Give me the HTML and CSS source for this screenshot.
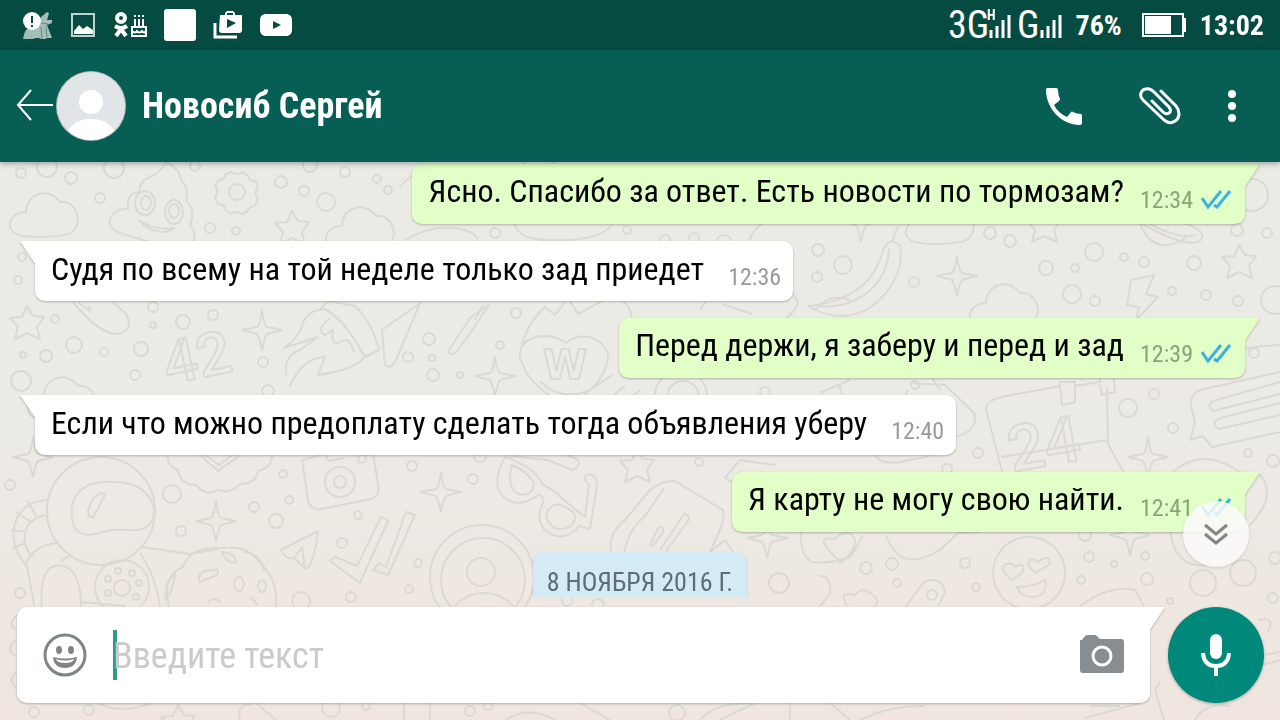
FILE: index.html
```html
<!DOCTYPE html>
<html lang="ru">
<head>
<meta charset="utf-8">
<meta name="viewport" content="width=device-width, initial-scale=1">
<title>Новосиб Сергей</title>
<link rel="stylesheet" href="styles.css">
</head>
<body>
<svg class="wallpaper" viewBox="0 0 1280 720" preserveAspectRatio="xMidYMid slice" aria-hidden="true">
  <defs>
    <path id="star" d="M0-17 6-7 17-6 10 4 13 16 0 10-12 16-9 4-17-5-5-6Z"/>
    <path id="spark" d="M0-20Q2-4 5-3L20 0 5 4Q3 6 0 20-3 6-5 4L-20 0-5-3Q-2-5 0-20Z"/>
    <path id="cloud" d="M-22 22C-44 20-38-2-20-2-20-20 2-28 14-12 30-14 38 8 26 18 20 23-10 24-22 22Z"/>
  </defs>
  <g id="dots"></g>
  <use href="#cloud" x="46" y="214"/>
  <use href="#cloud" x="362" y="228"/>
  <use href="#cloud" x="1006" y="305"/>
  <use href="#cloud" x="942" y="221"/>
  <use href="#cloud" x="64" y="398"/>
  <use href="#star" x="292" y="228"/>
  <use href="#star" x="27" y="323"/>
  <use href="#star" x="1044" y="226"/>
  <use href="#star" x="1239" y="262"/>
  <use href="#star" x="637" y="466"/>
  <use href="#star" x="178" y="722"/>
  <use href="#spark" x="957" y="276"/>
  <use href="#spark" x="861" y="221"/>
  <use href="#spark" x="262" y="330"/>
  <use href="#spark" x="495" y="376"/>
  <use href="#spark" x="33" y="457"/>
  <use href="#spark" x="216" y="521"/>
  <use href="#spark" x="441" y="492"/>
  <use href="#spark" x="767" y="538"/>
  <use href="#spark" x="1148" y="457"/>
  <use href="#spark" x="1130" y="535"/>
  <!-- swirl face -->
  <path d="M150 177Q164 170 165 162Q180 168 181 180Q190 190 186 201Q196 210 190 225Q204 242 176 250L130 236Q104 230 111 217Q116 208 128 209Q126 192 140 192Q138 182 150 177ZM138 220Q155 231 174 228 158 239 138 220Z"/>
  <ellipse cx="145" cy="203" rx="10" ry="12"/><ellipse cx="146" cy="203" rx="5" ry="7"/>
  <ellipse cx="174" cy="212" rx="9" ry="12"/><ellipse cx="174" cy="211" rx="5" ry="7"/>
  <!-- gear -->
  <circle cx="237" cy="192" r="8"/>
  <path d="M231 172q6 4 12 0l5 4q1 5 8 5l2 7q-5 5 0 11l-3 7q-6 0-8 6l-6 2q-5-4-10 0l-6-4q0-6-7-6l-3-7q5-5 0-11l4-6q6 0 7-6Z"/>
  <!-- planet -->
  <path d="M1140 224Q1150 247 1168 245 1182 243 1188 235M1142 224Q1190 250 1201 240 1208 230 1180 222M1150 224Q1180 240 1196 235"/>
  <circle cx="1252" cy="195" r="16"/>
  <!-- banana -->
  <path d="M892 242 898 226M900 245Q906 280 870 308 840 325 808 306 868 300 882 254Q885 243 892 241ZM889 249Q887 285 855 300 840 308 818 306"/>
  <!-- bolt -->
  <path d="M1131 280 1154 275 1146 294 1158 297 1136 320 1139 307 1127 305Z"/>
  <!-- numerals, calendar and crest lettering -->
  <text x="168" y="385" font-size="60" transform="rotate(-12 168 385)">42</text>
  <path d="M1060 386v-4h15v20l-13 3-2-19-48 9q-27 4-26 14l18 70M1075 386l25-4v-8h13l2 18-13 3-2-10M1107 387l1 57 20 36M1002 457l105-17"/>
  <text x="1012" y="472" font-size="64" transform="rotate(-10 1012 472)">24</text>
  <path d="M566 406Q528 384 523 365C510 342 541 326 566 343 585 326 614 345 607 363Q600 390 566 406ZM522 347Q525 326 545 307L555 315 568 298 578 314 604 300 617 300Q630 300 632 320"/>
  <text class="crest" x="543" y="379" font-size="40">W</text>
  <!-- pastry and flame rocket -->
  <path d="M73 302Q100 335 118 334 135 330 126 314L112 301M78 302Q96 317 88 306M286 375Q284 355 300 350L318 337 284 348Q297 340 302 326 306 310 325 309 345 320 365 357L379 350Q372 322 355 306L328 301 320 309M365 357Q354 370 318 375L325 357Q302 358 290 386M330 318Q315 330 325 335L333 330Q330 346 340 342Q350 335 354 353"/>
  <path d="M420 303 382 330 385 365Q390 370 396 360ZM449 350 470 318 489 305 469 335 460 347Q451 360 448 350M475 320l8-15M405 240Q440 220 470 232 485 240 470 248"/>
  <path d="M515 225Q520 242 560 240 600 240 612 225M750 240Q752 225 780 215M700 310Q715 283 760 278 790 280 798 303 788 325 760 330M722 304l30 10M816 309Q830 292 850 300M520 160l18 16 22-20M400 187Q410 174 422 173"/>
  <!-- lollipop, rolls -->
  <circle cx="681" cy="396" r="26"/><circle cx="683" cy="397" r="16"/>
  <path d="M625 386 581 420M640 390 600 425M540 381Q560 402 590 390L612 375M839 385 847 408Q880 450 915 408L955 437Q980 430 974 413L945 385 910 383M875 455Q882 468 914 459 946 455 952 437M820 393 850 380M890 422l18-32M930 340Q922 370 941 390"/>
  <!-- speech card -->
  <path d="M1280 372 1200 390Q1190 394 1191 405L1195 423 1190 440 1203 436 1212 447 1280 432M1280 382 1213 401Q1206 406 1213 411L1280 394M1280 403 1220 418Q1210 423 1219 429L1280 415M1184 375Q1200 350 1280 345"/>
  <!-- astronaut -->
  <circle cx="101" cy="511" r="54"/>
  <path d="M75 529C64 500 80 480 113 482 140 482 152 495 154 510 154 530 140 531 126 530 105 526 90 543 75 529ZM101 493q-10 4-13 18 0 7 5 6 5-8 10-18 4-6-2-6ZM47 500C15 500 1 539 27 566M46 515C20 520 20 545 33 557M27 500l9 16M16 512l15 10M11 530l15 2M13 548l12-5M26 565Q32 545 58 543M27 566 35 610M42 610Q38 565 60 565 82 568 81 610M60 562 70 555M140 553Q158 580 160 610M82 602 126 606M142 547 190 554 218 549"/>
  <circle cx="122" cy="587" r="27"/><circle cx="122" cy="588" r="8"/>
  <circle cx="118" cy="571" r="3"/><circle cx="132" cy="573" r="3"/><circle cx="108" cy="579" r="3"/><circle cx="139" cy="583" r="3"/><circle cx="108" cy="593" r="3"/><circle cx="136" cy="597" r="3"/>
  <!-- donut -->
  <path d="M170 610Q160 577 183 567 190 546 222 548 250 545 262 565 278 580 276 608M175 575Q164 580 166 600 173 590 175 575ZM199 580Q197 570 215 570 220 568 217 575L200 582ZM222 552q14 1 14 11-10 0-14-11ZM244 552q18 2 20 20M208 603q5-8 13 0M250 597l8 8"/>
  <ellipse cx="239" cy="584" rx="5" ry="7"/><ellipse cx="262" cy="586" rx="4" ry="6"/>
  <path d="M168 455Q166 466 178 470 180 485 196 485 206 497 218 490 232 494 240 484 256 484 258 471 272 468 272 455M200 455 218 471 240 455M205 455l14 10 13-10"/>
  <!-- camera -->
  <path d="M302 460 308 500Q311 511 321 509L371 499Q381 495 378 483L373 455M302 460l20-5M325 455l4 6 15-3"/>
  <circle cx="340" cy="482" r="15"/><circle cx="340" cy="482" r="6"/><circle cx="362" cy="459" r="4"/>
  <path d="M318 531 281 550Q285 560 294 558L306 569Q314 565 318 531M294 558 302 547 305 569M330 561 335 557 357 566 381 517 388 521 360 583ZM373 570 379 563 386 567 406 512 415 515 388 575Z"/>
  <!-- sunglasses -->
  <path d="M505 457Q490 485 504 497 514 507 530 500L539 495Q547 497 540 510 537 529 553 535 568 540 579 526L590 529 597 485Q596 472 586 475 583 480 589 484L585 517 565 501Q555 490 543 485 535 467 505 457ZM512 465Q506 487 518 494 533 497 534 483 528 472 512 465ZM554 505Q541 513 550 524 559 534 572 525 580 515 567 508 560 503 554 505ZM510 456 548 460 572 470Q582 466 577 459L560 452"/>
  <!-- profile badge -->
  <circle cx="482" cy="577" r="52"/><circle cx="483" cy="580" r="42"/><circle cx="481" cy="572" r="14"/>
  <path d="M455 606Q466 593 485 593 503 594 513 606"/>
  <!-- toaster -->
  <path d="M612 553Q606 535 625 520L650 490Q660 481 675 481L723 510Q725 520 720 530L710 552M624 553Q628 530 645 516L664 488M710 552 725 540 733 552M650 545 658 528q6-4 5 4L653 546ZM660 550 684 514q7 1 4 7L666 551M725 478 740 488M725 478 740 460 775 465"/>
  <!-- heart tags and faces -->
  <path d="M803 520Q796 552 812 562 830 564 850 557 862 540 862 535M829 550Q816 536 835 539 848 526 855 540 856 551 840 563ZM886 535Q900 575 940 550L958 533 980 532M850 610Q835 590 855 595 862 586 872 594 884 604 868 610M905 608 924 582Q943 575 945 593L938 606M820 576q12 0 10 18l-10 12"/>
  <circle cx="932" cy="595" r="5"/>
  <circle cx="1029" cy="573" r="36"/>
  <path d="M1012 580Q997 568 1006 564 1014 563 1015 567 1025 561 1023 572ZM1036 573Q1023 563 1032 559L1038 562Q1050 553 1050 564ZM1017 587Q1034 587 1045 580 1048 596 1033 597 1020 597 1017 587ZM1080 606Q1110 584 1135 590L1144 606M1165 480Q1200 440 1245 476M1260 475Q1278 495 1250 525M1170 526Q1172 570 1210 565"/>
  <circle cx="1203" cy="583" r="13"/><circle cx="1243" cy="573" r="13"/>
  <!-- strip under the composer -->
  <path d="M17 615Q7 624 16 630M16 640Q4 650 16 656M16 672Q8 680 16 688M100 704Q120 714 150 704M240 720Q236 704 252 704M256 703 276 720M404 703v17M430 703v17M505 720Q530 705 555 720M580 703 610 720M700 720Q715 703 750 703M720 720l35-17M790 703v17M830 703 850 720M860 720Q890 705 925 706M1085 718 1140 703M1090 706h30M1195 720Q1205 702 1230 706M1160 682 1155 690 1164 720M1258 620Q1276 616 1268 632M1265 655 1280 652M1262 665 1280 660"/>
</svg>

<div class="screen">
  <div class="status">
    <div class="status-group notices">
      <svg width="32" height="32" viewBox="0 0 32 32" aria-hidden="true"><path fill="#a4bfb8" d="M2 30Q4 19 9 18L18 15 20 8 26 3 28 4 26 11 31 11V14L26 16 31 29H26L24 30H20L18 29H15L12 30Z"/><path stroke="#5f8b82" fill="none" d="M20 18l1 12M25 18l1 10M19 14l8 1"/><circle cx="11" cy="12" r="9" fill="#fff"/><path stroke="#06483f" stroke-width="2" d="M11 7v7M11 16v2"/></svg>
      <svg width="26" height="26" viewBox="0 0 26 26" aria-hidden="true"><path fill="none" stroke="#bdd3ce" stroke-width="2" d="M2 2h22v22H2Z"/><path fill="#fff" d="M4 22v-3l5-6 4 4 4-3 6 4v4Z"/></svg>
      <svg width="34" height="28" viewBox="0 0 34 28" fill="none" stroke="#fff" aria-hidden="true"><circle cx="8" cy="7" r="4" stroke-width="4"/><path stroke-width="4" d="M2 15Q8 19 14 15M8 18 3 25M8 18l5 7"/><path stroke-width="2" d="M19 16h14v9H19ZM19 20q3 3 5 0 2 3 5 0 2 3 4 0M22 8v8M26 8v8M30 8v8M22 4v2M26 4v2M30 4v2"/></svg>
      <svg width="32" height="32" viewBox="0 0 32 32" aria-hidden="true"><rect width="32" height="32" rx="3" fill="#fff"/></svg>
      <svg width="30" height="30" viewBox="0 0 30 30" aria-hidden="true"><path d="M2 13v14h22" fill="none" stroke="#fff" stroke-width="3"/><path fill="#fff" fill-rule="evenodd" d="M7 5h5V3l2-2h6l2 2v2h7v15q0 3-3 3H9q-3 0-3-3ZM14 5h6V3h-6ZM14 9v9l9-5Z"/></svg>
      <svg width="32" height="22" viewBox="0 0 32 22" aria-hidden="true"><path fill="#fff" fill-rule="evenodd" d="M5 0Q16-1 27 0 32 1 32 6V16Q32 21 27 22 16 23 5 22 0 21 0 16V6Q0 1 5 0ZM13 7v8l8-4Z"/></svg>
    </div>
    <div class="status-group system">
      <span class="network">3G</span>
      <span class="signal"><span class="signal-type">H</span><svg width="22" height="26" viewBox="0 0 22 26" stroke="#fff" stroke-width="3" aria-hidden="true"><path d="M2 26v-8M8 26V14M14 26V8M20 26V3"/></svg></span>
      <span class="network">G</span>
      <svg class="bars" width="22" height="26" viewBox="0 0 22 26" stroke="#fff" stroke-width="3" aria-hidden="true"><path d="M2 26v-8M8 26V14M14 26V8M20 26V3"/></svg>
      <span class="percent">76%</span>
      <svg class="battery" width="44" height="24" viewBox="0 0 44 24" aria-hidden="true"><path d="M1 1h40v22H1Z" fill="none" stroke="#fff" stroke-width="2"/><path fill="#fff" d="M3 3h26v18H3ZM40 5h4v14h-4Z"/></svg>
      <time class="clock">13:02</time>
    </div>
  </div>

  <header class="toolbar">
    <button class="icon-button back" aria-label="Назад"><svg width="38" height="34" viewBox="0 0 38 34" fill="none" stroke="#fff" stroke-width="2" aria-hidden="true"><path d="M37 16H2M15 1 2 16 15 31"/></svg></button>
    <svg class="avatar" width="70" height="70" viewBox="0 0 70 70" aria-hidden="true"><defs><clipPath id="round"><circle cx="35" cy="35" r="34"/></clipPath></defs><circle cx="35" cy="35" r="35" fill="#b5bdbf"/><circle cx="35" cy="35" r="34" fill="#e1e5e7"/><g clip-path="url(#round)" fill="#fff"><circle cx="35" cy="31" r="12"/><path d="M10 64Q16 48 35 48T60 64L50 72H20Z"/></g></svg>
    <h1 class="contact">Новосиб Сергей</h1>
    <button class="icon-button" aria-label="Позвонить"><svg width="38" height="38" viewBox="0 0 38 38" aria-hidden="true"><path fill="#fff" d="M3 1h8q2 0 2 2 0 5 2 9 0 1-1 2l-5 4q4 8 13 12l4-5q1-1 2 0 4 2 8 2 1 0 1 2v7q0 2-2 2C16 38 1 21 1 3 1 1 2 1 3 1Z"/></svg></button>
    <button class="icon-button clip" aria-label="Прикрепить"><svg width="44" height="40" viewBox="0 0 44 40" fill="none" stroke="#fff" stroke-width="3" stroke-linecap="round" aria-hidden="true"><path d="M23 5 38 20C43 26 41 33 37 35 33 38 29 37 25 33L5 14C0 9 4 3 8 3 11 2 14 4 16 6L31 21Q34 25 31 27 28 29 25 26L14 15"/></svg></button>
    <button class="icon-button more" aria-label="Меню"><svg width="10" height="34" viewBox="0 0 10 34" fill="#fff" aria-hidden="true"><circle cx="5" cy="5" r="4"/><circle cx="5" cy="17" r="4"/><circle cx="5" cy="29" r="4"/></svg></button>
  </header>

  <main class="chat">
    <div class="messages">
      <div class="bubble out"><span>Ясно. Спасибо за ответ. Есть новости по тормозам?</span><time>12:34</time><svg class="ticks" viewBox="0 0 30 20" aria-hidden="true"><path d="M1 8 7 17 20 1M13 15 16 17 29 1"/></svg></div>
      <div class="bubble in"><span>Судя по всему на той неделе только зад приедет</span><time>12:36</time></div>
      <div class="bubble out"><span>Перед держи, я заберу и перед и зад</span><time>12:39</time><svg class="ticks" viewBox="0 0 30 20" aria-hidden="true"><path d="M1 8 7 17 20 1M13 15 16 17 29 1"/></svg></div>
      <div class="bubble in"><span>Если что можно предоплату сделать тогда объявления уберу</span><time>12:40</time></div>
      <div class="bubble out"><span>Я карту не могу свою найти.</span><time>12:41</time><svg class="ticks" viewBox="0 0 30 20" aria-hidden="true"><path d="M1 8 7 17 20 1M13 15 16 17 29 1"/></svg></div>
      <div class="date">8 НОЯБРЯ 2016 Г.</div>
    </div>
    <button class="jump" aria-label="Вниз"><svg width="24" height="22" viewBox="0 0 24 22" fill="none" stroke="#858585" stroke-width="3" aria-hidden="true"><path d="M1 2 12 11 23 2M1 11 12 20 23 11"/></svg></button>
  </main>

  <form class="composer">
    <div class="field">
      <button type="button" class="icon-button" aria-label="Эмодзи"><svg width="44" height="44" viewBox="0 0 44 44" aria-hidden="true"><circle cx="22" cy="22" r="20" fill="none" stroke="#7f8586" stroke-width="3"/><g fill="#7f8586"><ellipse cx="16" cy="17" rx="3" ry="4"/><ellipse cx="28" cy="17" rx="3" ry="4"/><path fill-rule="evenodd" d="M10 24Q22 27 34 24 33 35 22 35T10 24ZM13 26Q14 30 22 30T31 26Q22 29 13 26Z"/></g></svg></button>
      <input class="entry" type="text" placeholder="Введите текст" aria-label="Введите текст">
      <button type="button" class="icon-button" aria-label="Камера"><svg width="44" height="40" viewBox="0 0 44 40" aria-hidden="true"><path fill="#888d91" d="M0 5H2L5 1Q6 0 8 0H14Q16 0 17 1L20 4H41Q44 4 44 7V35Q44 38 41 38H3Q0 38 0 35Z"/><circle cx="22" cy="21" r="9" fill="none" stroke="#fff" stroke-width="3"/></svg></button>
    </div>
    <button type="button" class="mic" aria-label="Голосовое сообщение"><svg width="30" height="42" viewBox="0 0 30 42" aria-hidden="true"><rect x="9" y="0" width="12" height="25" rx="6" fill="#fff"/><path d="M2 19Q3 32 15 32T28 19M15 32V42" fill="none" stroke="#fff" stroke-width="4"/></svg></button>
  </form>
</div>
<script src="wallpaper.js"></script>
</body>
</html>
```
FILE: styles.css
```css
* { box-sizing: border-box; }

body {
  margin: 0;
  background: linear-gradient(#ebebe6 40%, #edeae5 65%, #f0e5df);
  color: #000;
  font-family: "Roboto Condensed", "Liberation Sans Narrow", Roboto, sans-serif;
}

button {
  padding: 0;
  border: 0;
  background: none;
  cursor: pointer;
}

svg { flex: none; }

.wallpaper {
  position: fixed;
  inset: 0;
  width: 100%;
  height: 100%;
  fill: none;
  stroke: #dbd9d4;
  stroke-width: 2;
  stroke-linejoin: round;
}

.wallpaper text {
  font-family: Roboto, sans-serif;
  font-weight: 500;
}

.wallpaper .crest {
  font-family: "DejaVu Sans", sans-serif;
  font-weight: 700;
}

.screen {
  position: relative;
  display: flex;
  flex-direction: column;
  height: 100vh;
}

.status {
  display: flex;
  flex: none;
  align-items: center;
  justify-content: space-between;
  height: 50px;
  padding: 0 16px 0 21px;
  background: #064b42;
  color: #fff;
}

.status-group {
  display: flex;
  align-items: center;
}

.notices { gap: 17px; }

.network {
  font-size: 38px;
  font-weight: 400;
  line-height: 48px;
}

.signal {
  display: flex;
  position: relative;
  margin-right: 6px;
}

.signal-type {
  position: absolute;
  top: -4px;
  left: -2px;
  font-size: 14px;
  font-weight: 700;
  line-height: 14px;
}

.bars { margin-right: 14px; }

.percent,
.clock {
  font-size: 28px;
  font-weight: 700;
}

.battery { margin: 0 14px 0 20px; }

.toolbar {
  display: flex;
  flex: none;
  align-items: center;
  height: 112px;
  padding: 0 43px 0 16px;
  background: #075e54;
  box-shadow: 0 2px 5px rgba(0, 0, 0, .3);
  z-index: 1;
}

.icon-button {
  display: flex;
  align-items: center;
  justify-content: center;
}

.avatar { margin: 0 16px 0 2px; }

.contact {
  flex: 1;
  margin: 0;
  color: #fff;
  font-size: 36px;
  font-weight: 700;
  line-height: 44px;
}

.clip { margin: 0 45px 0 55px; }

.chat {
  position: relative;
  flex: 1;
  min-height: 0;
  margin-bottom: 9px;
}

.messages {
  display: flex;
  flex-direction: column;
  align-items: flex-start;
  gap: 17px;
  height: 100%;
  padding: 2px 35px 0;
  overflow: hidden;
}

.bubble {
  position: relative;
  display: flex;
  flex: none;
  min-height: 60px;
  padding: 8px 12px 10px 16px;
  border-radius: 10px;
  filter: drop-shadow(0 1px 1px rgba(0, 0, 0, .25));
  font-size: 32px;
  line-height: 40px;
}

.bubble::before {
  content: "";
  position: absolute;
  top: 0;
  width: 16px;
  height: 24px;
  background: inherit;
}

.in {
  background: #fff;
  border-top-left-radius: 0;
}

.in::before {
  right: calc(100% - 1px);
  clip-path: polygon(0 0, 100% 0, 100% 100%);
}

.out {
  align-self: flex-end;
  padding: 7px 14px 10px 16px;
  background: #e1ffc7;
  border-top-right-radius: 0;
}

.out::before {
  left: calc(100% - 1px);
  clip-path: polygon(0 0, 100% 0, 0 100%);
}

.bubble time {
  align-self: flex-end;
  margin-left: 24px;
  color: #999;
  font-size: 24px;
  line-height: 28px;
}

.out time {
  margin-left: 16px;
  color: #8aa47a;
}

.ticks {
  align-self: flex-end;
  width: 30px;
  height: 20px;
  margin: 0 0 4px 8px;
  fill: none;
  stroke: #3eb1e3;
  stroke-width: 3;
}

.date {
  flex: none;
  align-self: center;
  height: 60px;
  margin-top: 3px;
  padding: 12px 14px;
  border-radius: 10px;
  background: #d4eaf4;
  box-shadow: 0 1px 2px rgba(0, 0, 0, .2);
  color: #5d6d75;
  font-size: 26px;
  line-height: 36px;
}

.jump {
  position: absolute;
  right: 31px;
  bottom: 31px;
  display: flex;
  align-items: center;
  justify-content: center;
  width: 66px;
  height: 66px;
  border-radius: 50%;
  background: rgba(250, 250, 250, .85);
  box-shadow: 0 1px 3px rgba(0, 0, 0, .15);
}

.composer {
  display: flex;
  flex: none;
  align-items: center;
  gap: 18px;
  padding: 0 16px 17px 17px;
}

.field {
  position: relative;
  display: flex;
  flex: 1;
  align-items: center;
  height: 96px;
  padding: 0 26px;
  border-radius: 10px 0 10px 10px;
  background: #fff;
  filter: drop-shadow(0 1px 1px rgba(0, 0, 0, .25));
}

.field::before {
  content: "";
  position: absolute;
  top: 0;
  left: calc(100% - 1px);
  width: 16px;
  height: 24px;
  background: inherit;
  clip-path: polygon(0 0, 100% 0, 0 100%);
}

.entry {
  flex: 1;
  min-width: 0;
  height: 50px;
  margin: 0 26px;
  padding: 2px 0 0;
  border: 0;
  outline: 0;
  background: linear-gradient(90deg, #2d9d8b 4px, transparent 4px);
  color: #000;
  font: inherit;
  font-size: 36px;
}

.entry::placeholder {
  color: #cbcbcb;
  opacity: 1;
}

.mic {
  display: flex;
  align-items: center;
  justify-content: center;
  width: 96px;
  height: 96px;
  border-radius: 50%;
  background: #00897b;
  box-shadow: 0 1px 3px rgba(0, 0, 0, .3);
}
```
FILE: wallpaper.js
```js
// Loose bubbles scattered between the wallpaper doodles: x, y, radius.
const dots = [
  [21,173,5],[47,167,10],[71,178,6],[114,168,10],[100,198,5],[195,166,5],[281,182,6],[304,191,5],
  [326,202,9],[310,165,7],[345,172,5],[377,179,4],[388,190,4],[210,228,5],[236,231,4],[22,257,4],
  [18,280,4],[153,307,5],[153,325,3],[183,322,7],[213,315,5],[55,319,4],[23,355,3],[46,356,6],
  [74,345,8],[104,352,4],[141,349,7],[21,381,10],[135,375,5],[263,362,5],[408,357,5],[495,233,5],
  [627,230,4],[665,240,5],[694,238,5],[724,243,8],[818,250,6],[817,277,5],[516,313,5],[429,339,6],
  [432,358,3],[433,375,6],[460,375,3],[500,345,4],[843,265,9],[914,282,5],[990,233,6],[1010,241,6],
  [1046,268,7],[1075,268,4],[1094,252,9],[1124,257,4],[1144,262,5],[1194,263,7],[1237,230,6],
  [1267,233,5],[1072,294,9],[1095,301,5],[1172,291,4],[1206,295,5],[1238,301,5],[1275,300,14],
  [1254,353,5],[915,385,4],[10,485,5],[172,494,9],[181,531,5],[283,474,4],[254,507,5],[276,521,7],
  [289,500,4],[342,543,5],[358,515,4],[412,466,5],[20,593,5],[301,601,9],[351,597,5],[409,589,4],
  [34,712,5],[89,710,5],[331,708,9],[366,706,4],[268,391,6],[473,479,5],[480,456,6],[418,563,4],
  [699,462,4],[779,583,10],[567,601,5],[598,605,6],[470,711,5],[488,706,4],[677,713,8],[765,392,5],
  [1128,408,9],[1154,394,5],[1173,428,5],[978,453,5],[947,469,5],[1248,453,4],[1273,461,6],
  [1085,535,6],[866,568,6],[892,564,6],[897,583,4],[965,563,5],[976,587,4],[1089,557,5],
  [1114,564,3],[1145,556,4],[1081,580,4],[1147,579,6],[1170,601,3],[1273,598,5],[1275,558,6]
];
const layer = document.getElementById("dots");
for (const [x, y, r] of dots) {
  const dot = document.createElementNS("http://www.w3.org/2000/svg", "circle");
  dot.setAttribute("cx", x);
  dot.setAttribute("cy", y);
  dot.setAttribute("r", r);
  layer.append(dot);
}
```
